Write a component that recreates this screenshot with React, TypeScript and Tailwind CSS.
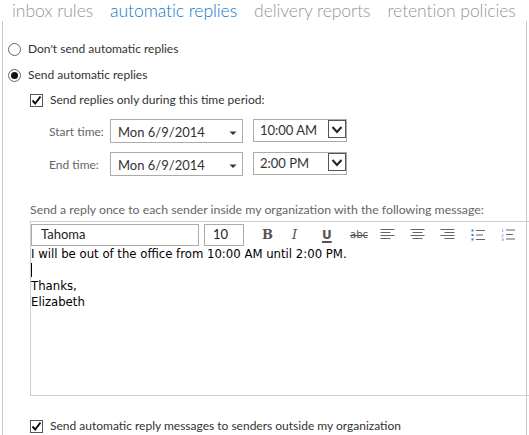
import React from "react";

const Check = () => (
  <span className="w-[13px] h-[13px] border border-[#555] bg-white flex items-center justify-center shrink-0">
    <svg width="11" height="11" viewBox="0 0 11 11">
      <path d="M1.5 5.5 L4.2 8.5 L9.5 1.5" fill="none" stroke="#111" strokeWidth="2" />
    </svg>
  </span>
);

const Radio = ({ on }: { on?: boolean }) => (
  <span className="w-[13px] h-[13px] rounded-full border border-[#666] bg-white flex items-center justify-center shrink-0">
    {on && <span className="w-[7px] h-[7px] rounded-full bg-[#111]" />}
  </span>
);

const DateSelect = ({ v }: { v: string }) => (
  <div className="w-[133px] h-[24px] border border-[#ababab] flex items-center pl-[7px] pr-[5px] text-[13px] text-[#333]">
    <span className="flex-1 pt-[3px]">{v}</span>
    <svg width="8" height="6" viewBox="0 0 8 6" className="mt-[4px]">
      <path d="M0.5 1.5 L7.5 1.5 L4 5 Z" fill="#333" />
    </svg>
  </div>
);

const TimeSelect = ({ v }: { v: string }) => (
  <div className="w-[94px] h-[23px] border border-[#ababab] flex items-start ml-[10px]">
    <span className="flex-1 pl-[6px] pt-[2px] text-[13px] text-[#333] leading-[16px]">{v}</span>
    <span className="w-[18px] h-[18px] border border-[#555] bg-white flex items-center justify-center">
      <svg width="12" height="9" viewBox="0 0 12 9">
        <path d="M1.5 2 L6 7 L10.5 2" fill="none" stroke="#222" strokeWidth="2" />
      </svg>
    </span>
  </div>
);

const Lines = ({ align }: { align: "l" | "c" | "r" }) => {
  const widths = [14, 10, 14, 10];
  return (
    <svg width="15" height="11" viewBox="0 0 15 11">
      {widths.map((w, i) => {
        const x = align === "l" ? 0.5 : align === "c" ? (15 - w) / 2 : 14.5 - w;
        return <rect key={i} x={x} y={i * 3} width={w} height="1" fill="#666" />;
      })}
    </svg>
  );
};

export default function App() {
  return (
    <div
      className="w-[529px] h-[435px] overflow-hidden bg-white flex flex-col"
      style={{ fontFamily: "Lato, 'Liberation Sans', sans-serif" }}
    >
      <div className="h-[20px] flex items-start pl-[12px] gap-[17px] text-[17.6px] leading-[20px] font-light tracking-[-0.1px] text-[#969696] whitespace-nowrap mt-[1px]">
        <span>inbox rules</span>
        <span className="text-[#0f78cc]">automatic replies</span>
        <span>delivery reports</span>
        <span>retention policies</span>
      </div>
      <div className="ml-[2px] w-[525px] flex-1 border-x border-[#c8c8c8] flex flex-col text-[12px] text-[#333]">
        <div className="flex items-center gap-[7px] h-[18px] mt-[19px] pl-[5px]">
          <Radio />
          <span>Don't send automatic replies</span>
        </div>
        <div className="flex items-center gap-[7px] h-[18px] mt-[8px] pl-[5px]">
          <Radio on />
          <span>Send automatic replies</span>
        </div>
        <div className="flex items-center gap-[7px] h-[18px] mt-[7px] pl-[27px]">
          <Check />
          <span>Send replies only during this time period:</span>
        </div>
        <div className="flex items-start h-[24px] mt-[10px] pl-[46px]">
          <span className="w-[61px] text-[#666] pt-[4px]">Start time:</span>
          <DateSelect v="Mon 6/9/2014" />
          <TimeSelect v="10:00 AM" />
        </div>
        <div className="flex items-start h-[24px] mt-[9px] pl-[46px]">
          <span className="w-[61px] text-[#666] pt-[4px]">End time:</span>
          <DateSelect v="Mon 6/9/2014" />
          <TimeSelect v="2:00 PM" />
        </div>
        <div className="h-[16px] mt-[26px] pl-[27px] text-[12.3px] text-[#666] flex items-center whitespace-nowrap">
          Send a reply once to each sender inside my organization with the following message:
        </div>
        <div className="ml-[27px] mt-[3px] w-[510px] h-[175px] border border-[#cfcfcf] border-r-0 flex flex-col">
          <div className="flex items-center h-[23px] mt-[1px]">
            <div className="w-[168px] h-[22px] border border-[#ababab] pl-[9px] text-[13px] text-[#222] flex items-center">
              Tahoma
            </div>
            <div className="w-[40px] h-[22px] ml-[5px] border border-[#ababab] pl-[8px] text-[13px] text-[#222] flex items-center">
              10
            </div>
            <div className="flex items-center ml-[18px] text-[#555]">
              <span className="w-[30px] text-[13px] font-bold" style={{ fontFamily: "'DejaVu Serif', serif" }}>B</span>
              <span className="w-[30px] text-[13px] italic" style={{ fontFamily: "'DejaVu Serif', serif" }}>I</span>
              <span className="w-[28px] text-[12px] font-bold underline decoration-2 underline-offset-2" style={{ fontFamily: "'DejaVu Sans', sans-serif" }}>U</span>
              <span className="w-[30px] text-[10px] line-through" style={{ fontFamily: "'DejaVu Sans', sans-serif" }}>abc</span>
              <span className="w-[30px] flex"><Lines align="l" /></span>
              <span className="w-[30px] flex"><Lines align="c" /></span>
              <span className="w-[31px] flex"><Lines align="r" /></span>
              <span className="w-[30px] flex">
                <svg width="15" height="12" viewBox="0 0 15 12">
                  <rect x="0.5" y="0.5" width="2" height="2" fill="#3b7fc4" />
                  <rect x="0.5" y="5" width="2" height="2" fill="#3b7fc4" />
                  <rect x="0.5" y="9.5" width="2" height="2" fill="#3b7fc4" />
                  <rect x="5" y="1" width="9" height="1" fill="#666" />
                  <rect x="5" y="5.5" width="7" height="1" fill="#666" />
                  <rect x="5" y="10" width="9" height="1" fill="#666" />
                </svg>
              </span>
              <span className="flex">
                <svg width="15" height="13" viewBox="0 0 15 13">
                  <text x="0" y="4" fontSize="4.5" fill="#3b7fc4" fontFamily="DejaVu Sans">1</text>
                  <text x="0" y="8.5" fontSize="4.5" fill="#3b7fc4" fontFamily="DejaVu Sans">2</text>
                  <text x="0" y="13" fontSize="4.5" fill="#3b7fc4" fontFamily="DejaVu Sans">3</text>
                  <rect x="5" y="1.5" width="9" height="1" fill="#666" />
                  <rect x="5" y="6" width="7" height="1" fill="#666" />
                  <rect x="5" y="10.5" width="9" height="1" fill="#666" />
                </svg>
              </span>
            </div>
          </div>
          <div
            className="text-[13px] leading-[16px] text-black"
            style={{ fontFamily: "'DejaVu Sans Condensed', 'DejaVu Sans', sans-serif" }}
          >
            <div>I will be out of the office from 10:00 AM until 2:00 PM.</div>
            <div className="h-[16px] flex items-center">
              <span className="w-px h-[14px] bg-black" />
            </div>
            <div>Thanks,</div>
            <div>Elizabeth</div>
          </div>
        </div>
        <div className="flex items-center gap-[7px] h-[18px] mt-[21px] pl-[27px]">
          <Check />
          <span>Send automatic reply messages to senders outside my organization</span>
        </div>
      </div>
    </div>
  );
}
